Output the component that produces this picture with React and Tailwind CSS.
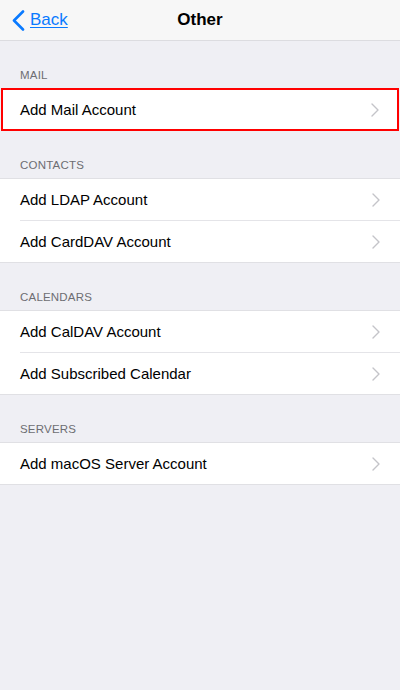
const sections = [
  { title: "MAIL", rows: ["Add Mail Account"], highlight: true },
  { title: "CONTACTS", rows: ["Add LDAP Account", "Add CardDAV Account"] },
  { title: "CALENDARS", rows: ["Add CalDAV Account", "Add Subscribed Calendar"] },
  { title: "SERVERS", rows: ["Add macOS Server Account"] },
];

function Chevron() {
  return (
    <svg width="8" height="14" viewBox="0 0 8 14" fill="none">
      <path d="M1 1l6 6-6 6" stroke="#c4c4c9" strokeWidth="1.4" strokeLinecap="round" strokeLinejoin="round" />
    </svg>
  );
}

export default function App() {
  return (
    <div className="w-[400px] h-[690px] bg-[#efeff4] font-['Liberation_Sans',Arial,sans-serif]">
      <div className="h-[41px] bg-[#f7f7f7] border-b border-[#dcdce0] flex items-center relative">
        <div className="flex items-center pl-[12px] text-[#0a7aff]">
          <svg width="13" height="21" viewBox="0 0 13 21" fill="none">
            <path d="M11 1.5L2 10.5l9 9" stroke="#0a7aff" strokeWidth="2.6" strokeLinecap="round" strokeLinejoin="round" />
          </svg>
          <span className="ml-[5px] text-[17px] underline underline-offset-2">Back</span>
        </div>
        <div className="absolute inset-x-0 text-center text-[17px] font-bold text-black pointer-events-none">Other</div>
      </div>
      {sections.map((s) => (
        <div key={s.title}>
          <div className="h-[47px] flex items-end pl-[20px] pb-[4px] text-[11.5px] text-[#6d6d72] tracking-[0.2px]">
            {s.title}
          </div>
          {s.highlight ? (
            <div className="bg-white border-2 border-[#ff0000] mx-[1px] h-[43px] flex items-center pl-[17px] pr-[18px]">
              <span className="flex-1 pt-[2px] text-[15px] text-black">{s.rows[0]}</span>
              <Chevron />
            </div>
          ) : (
            <div className="bg-white border-y border-[#e0e0e4]">
              {s.rows.map((r, i) => (
                <div key={r}>
                  {i > 0 && <div className="ml-[20px] h-px bg-[#e4e4e8]" />}
                  <div className="flex items-center h-[41px] pl-[20px] pr-[20px]">
                    <span className="flex-1 pt-[2px] text-[15px] text-black">{r}</span>
                    <Chevron />
                  </div>
                </div>
              ))}
            </div>
          )}
        </div>
      ))}
    </div>
  );
}
